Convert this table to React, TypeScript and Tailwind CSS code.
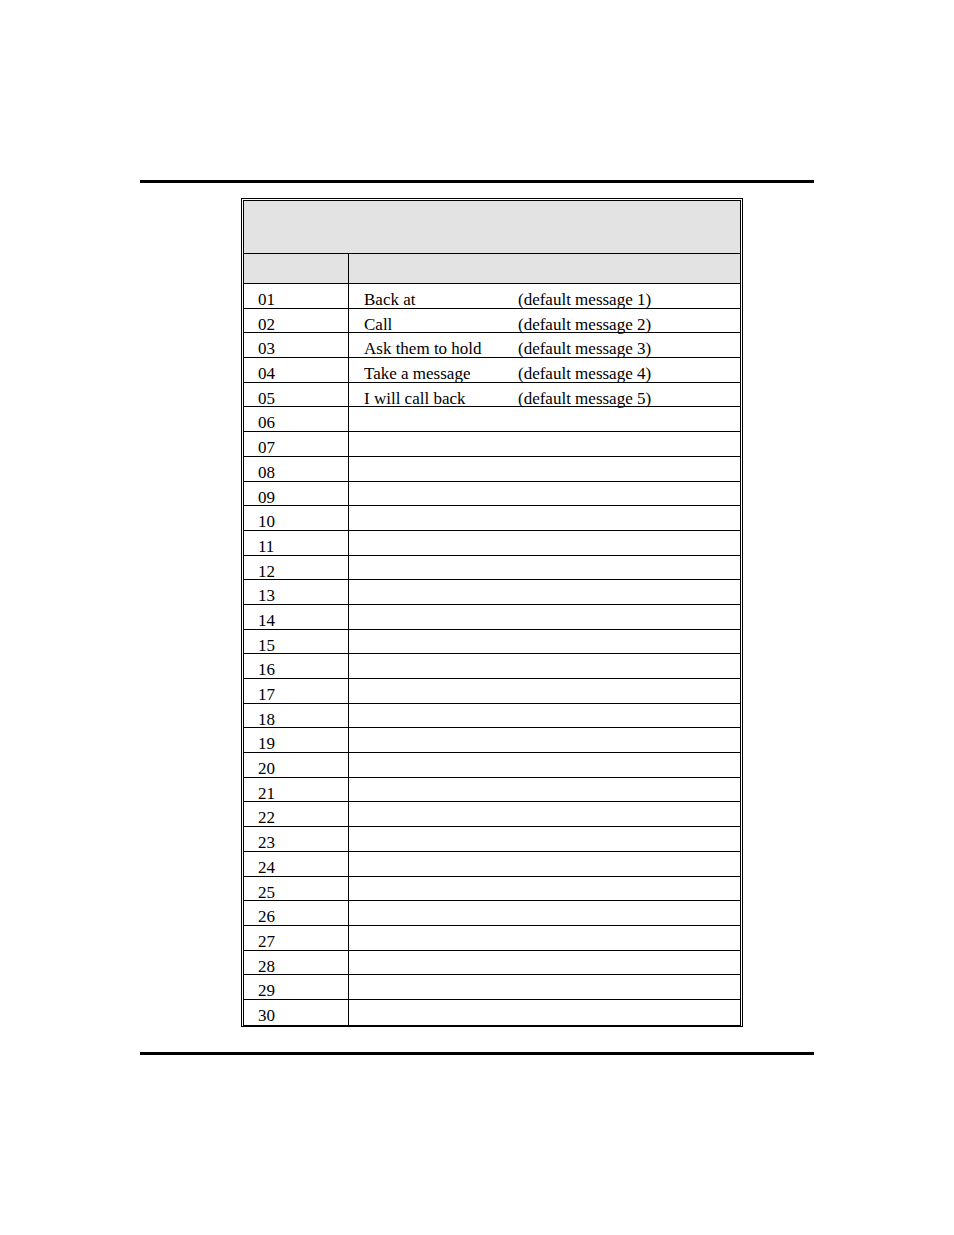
const messages: Record<number, [string, string]> = {
  1: ["Back at", "(default message 1)"],
  2: ["Call", "(default message 2)"],
  3: ["Ask them to hold", "(default message 3)"],
  4: ["Take a message", "(default message 4)"],
  5: ["I will call back", "(default message 5)"],
}

const rows = Array.from({ length: 30 }, (_, i) => i + 1)

export default function App() {
  return (
    <div className="w-[954px] h-[1235px] bg-white pt-[180px] font-['Liberation_Serif',_'Times_New_Roman',_serif] text-[17px] text-black">
      <div className="mx-[140px] h-[3px] bg-black" />

      <div className="ml-[241px] mt-[15px] w-[502px] border-[3px] border-double border-black border-b-2 [border-bottom-style:solid]">
        <div className="h-[53px] bg-[#e3e3e3] border-b border-black" />
        <div className="flex h-[30px] bg-[#e3e3e3] border-b border-black">
          <div className="w-[105px] border-r border-black" />
          <div className="flex-1" />
        </div>
        {rows.map((n) => {
          const msg = messages[n]
          return (
            <div
              key={n}
              className="flex h-[24.7px] border-b border-black last:border-b-0 leading-[24px]"
            >
              <div className="w-[105px] border-r border-black pl-[14px] pt-[4px]">
                {String(n).padStart(2, "0")}
              </div>
              <div className="flex-1 flex pl-[15px] pt-[4px]">
                {msg && (
                  <>
                    <span className="w-[154px]">{msg[0]}</span>
                    <span>{msg[1]}</span>
                  </>
                )}
              </div>
            </div>
          )
        })}
      </div>

      <div className="mx-[140px] mt-[25px] h-[3px] bg-black" />
    </div>
  )
}
